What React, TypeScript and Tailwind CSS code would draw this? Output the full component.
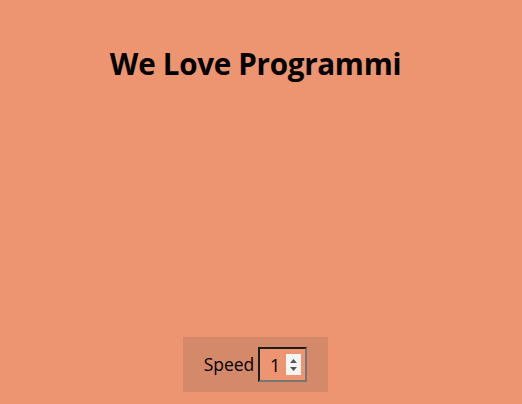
export default function App() {
  return (
    <div className="min-h-screen w-[522px] h-[404px] bg-[#ec9570] font-['Open_Sans',sans-serif] text-black flex flex-col items-center">
      <h1 className="mt-[42px] mr-[11px] text-[29.6px] font-bold leading-[44px] tracking-[-0.3px]">
        We Love Programmi
      </h1>
      <div className="flex-1" />
      <div className="mb-[12px] mr-[11px] w-[145px] h-[55px] bg-[#d4896a] flex items-center justify-center gap-[4px]">
        <span className="text-[17.5px] leading-none">Speed</span>
        <div className="w-[49px] h-[35px] bg-[#ec9570] border-2 border-t-[#1c1c1c] border-l-[#1c1c1c] border-r-[#767676] border-b-[#767676] flex items-center justify-end pr-[4px] gap-[6px]">
          <span className="text-[18px] leading-none">1</span>
          <div className="w-[15px] h-[21px] bg-[#f5f5f5] flex flex-col items-center justify-center gap-[4px]">
            <svg width="7" height="4" viewBox="0 0 7 4">
              <path d="M3.5 0 L7 4 L0 4 Z" fill="#555" />
            </svg>
            <svg width="7" height="4" viewBox="0 0 7 4">
              <path d="M0 0 L7 0 L3.5 4 Z" fill="#555" />
            </svg>
          </div>
        </div>
      </div>
    </div>
  );
}
